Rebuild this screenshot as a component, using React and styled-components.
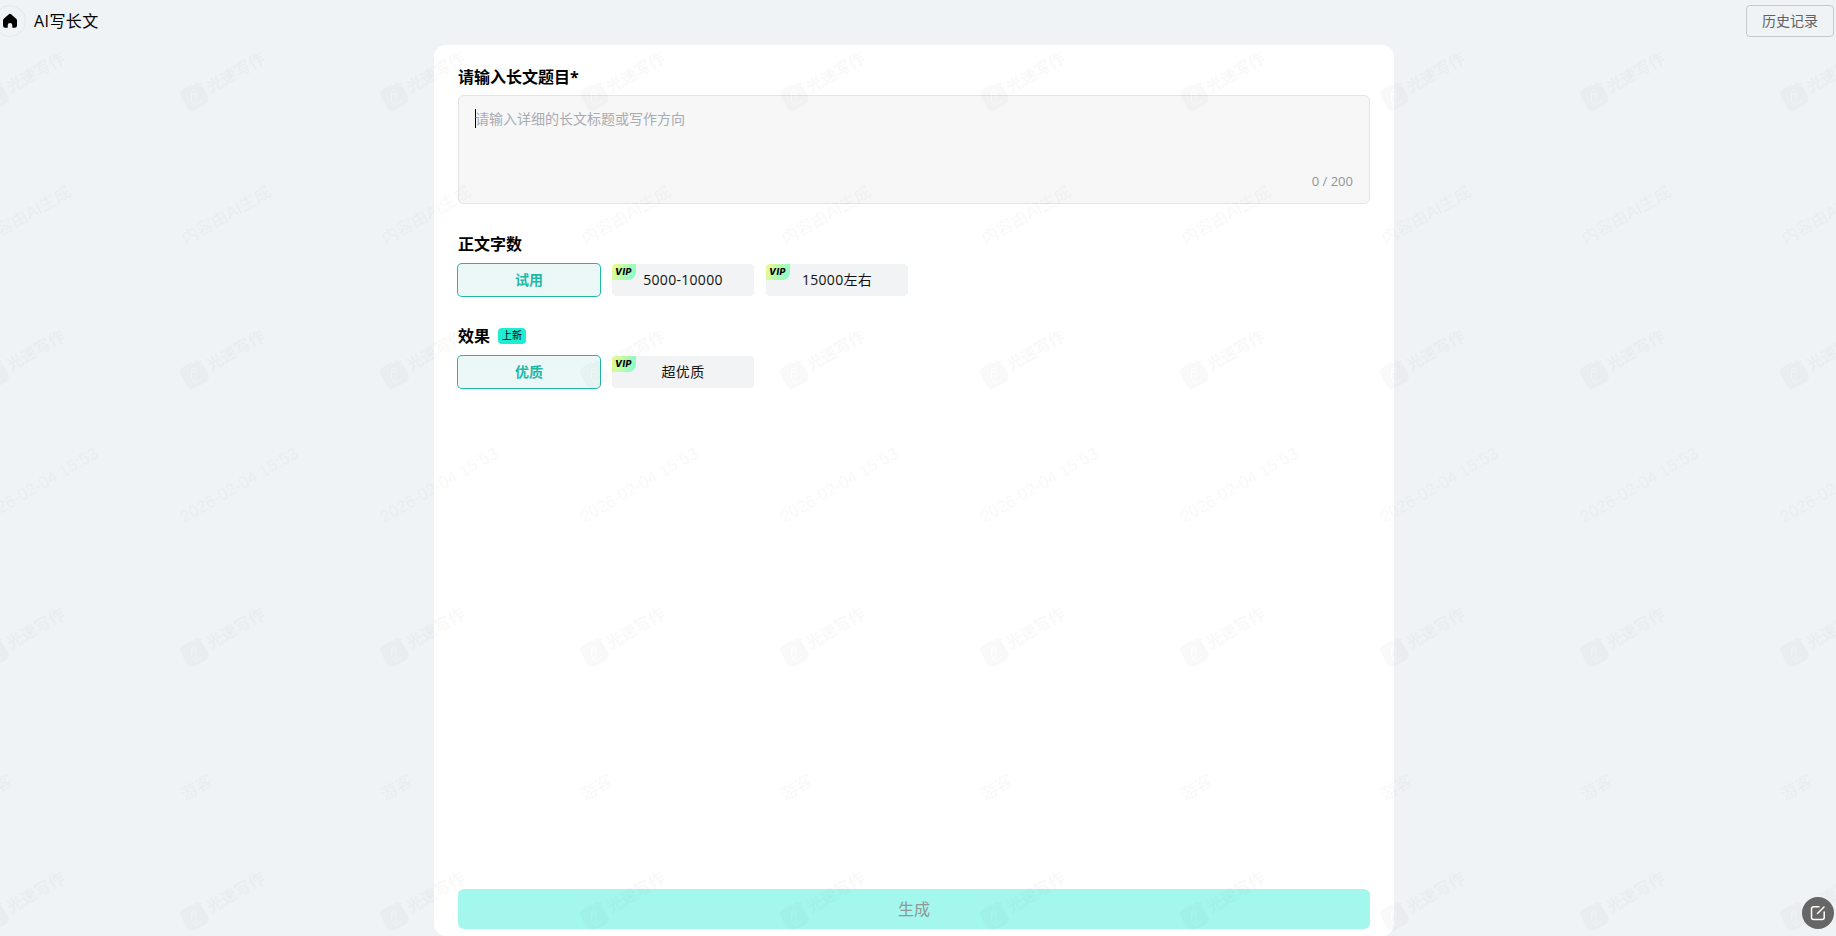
import React, { useState } from 'react'
import styled, { createGlobalStyle } from 'styled-components';

const GlobalStyle = createGlobalStyle`
    * {
        box-sizing: border-box;
    }
    body {
        margin: 0;
        overflow: hidden;
        font-family: "Open Sans", "Noto Sans CJK SC", sans-serif;
        font-size: 14px;
        color: #000;
        background-color: #eff3f6;
    }
    button {
        font-family: inherit;
        cursor: pointer;
    }
`;

const Page = styled.div`
    position: relative;
    height: 100vh;
    display: flex;
    flex-direction: column;
    overflow: hidden;
`;

const Topbar = styled.header`
    height: 45px;
    padding: 5px 2px 8px 0;
    display: flex;
    align-items: center;
    justify-content: space-between;
`;

const Homelink = styled.div`
    display: flex;
    align-items: center;
    gap: 8px;
    margin-left: -6px;
    font-size: 16px;
    letter-spacing: 0.4px;
    line-height: 32px;
`;

const Homecircle = styled.span`
    width: 32px;
    height: 32px;
    display: flex;
    align-items: center;
    justify-content: center;
    border: 1px solid #e3e8ea;
    border-radius: 50%;
`;

const Historybutton = styled.button`
    width: 88px;
    height: 32px;
    padding: 0 0 2px;
    font-size: 14px;
    color: #606266;
    background-color: transparent;
    border: 1px solid #c4c8cc;
    border-radius: 4px;
`;

const Card = styled.main`
    width: 960px;
    flex: 1;
    align-self: center;
    margin-right: 8px;
    padding: 20px 24px 7px;
    display: flex;
    flex-direction: column;
    background-color: white;
    border-radius: 12px;
`;

const Sectiontitle = styled.h2`
    height: 24px;
    margin: 0 0 ${props => props.$gap || 8}px;
    display: flex;
    align-items: center;
    gap: 8px;
    font-size: 16px;
    font-weight: 700;
    line-height: 24px;
`;

const Titlefield = styled.div`
    height: 109px;
    margin-bottom: 28px;
    padding: 12px 16px 12px;
    display: flex;
    flex-direction: column;
    justify-content: space-between;
    background-color: #f7f7f7;
    border: 1px solid #e4e4e4;
    border-radius: 6px;
`;

const Placeholder = styled.div`
    display: flex;
    align-items: center;
    height: 21px;
    color: #a8abb2;
    line-height: 21px;

    &::before {
        content: "";
        width: 1px;
        height: 19px;
        margin-right: -1px;
        background-color: black;
    }
`;

const Counter = styled.span`
    align-self: flex-end;
    font-size: 13px;
    line-height: 20px;
    color: #909399;
`;

const Optionrow = styled.div`
    display: flex;
    gap: 12px;
    margin-bottom: 28px;
`;

const Option = styled.button`
    position: relative;
    width: 142px;
    height: 32px;
    padding: 0 0 2px;
    border: none;
    border-radius: 4px;
    font-size: 14px;
    letter-spacing: ${props => props.$active ? '0' : '0.3px'};
    font-weight: ${props => props.$active ? 700 : 400};
    color: ${props => props.$active ? '#1fb8a6' : '#111'};
    background-color: ${props => props.$active ? '#ebf8f7' : '#f2f3f5'};
    box-shadow: ${props => props.$active ? '0 0 0 1px #1fb8a6' : 'none'};
`;

const Vipbadge = styled.span`
    position: absolute;
    top: 0;
    left: 0;
    width: 24px;
    height: 16px;
    padding-right: 1px;
    border-radius: 4px 0 8px 0;
    font-family: Inter, sans-serif;
    font-size: 9px;
    font-style: italic;
    font-weight: 800;
    letter-spacing: 0.6px;
    line-height: 16px;
    text-align: center;
    color: #000;
    background: linear-gradient(110deg, #f0fb8e, #7dfdd0);
`;

const Newtag = styled.span`
    width: 28px;
    height: 16px;
    border-radius: 4px;
    font-size: 10px;
    font-weight: 400;
    line-height: 15px;
    text-align: center;
    background-color: #1fecd2;
`;

const Generatebutton = styled.button`
    height: 40px;
    margin-top: auto;
    padding: 0 0 2px;
    border: none;
    border-radius: 6px;
    font-size: 16px;
    color: #909896;
    background-color: #a4f7ed;
`;

const Watermarklayer = styled.svg`
    position: absolute;
    top: 0;
    left: 0;
    opacity: 0.019;
    pointer-events: none;
    font-family: "Liberation Sans", "Noto Sans CJK SC", sans-serif;
    font-size: 16.8px;
`;

const Feedback = styled.button`
    position: absolute;
    right: 2px;
    bottom: 7px;
    width: 32px;
    height: 32px;
    padding: 0;
    display: flex;
    align-items: center;
    justify-content: center;
    border: none;
    border-radius: 50%;
    background-color: #666;
`;

const lengths = [
    { label: '试用' },
    { label: '5000-10000', vip: true },
    { label: '15000左右', vip: true },
];

const qualities = [
    { label: '优质' },
    { label: '超优质', vip: true },
];

const columns = Array.from({ length: 10 }, (_, i) => i * 200 - 20);
const logorows = [96.5, 374.5, 652.5, 916.5];
const textrows = [
    { text: '内容由AI生成', x: 6, y: 245 },
    { text: '2026-02-04 15:53', x: 4.5, y: 523 },
    { text: '游客', x: 5, y: 801 },
];

function Homeicon() {
    return (
        <svg width="16" height="16" viewBox="0 0 16 16">
            <path d="M6.6 1.5a2.1 2.1 0 0 1 2.8 0l4.8 4.2c.5.5.8 1 .8 1.7v5.2a2.2 2.2 0 0 1-2.2 2.2h-2.5v-2.5a2.3 2.3 0 0 0-4.6 0v2.5H3.2A2.2 2.2 0 0 1 1 12.6V7.4c0-.7.3-1.2.8-1.7z" fill="#000" />
        </svg>
    )
}

function Optiongroup({ items }) {
    const [current, setCurrent] = useState(0);
    return (
        <Optionrow>
            {items.map((item, i) => (
                <Option key={item.label} $active={i === current} onClick={() => setCurrent(i)}>
                    {item.vip && <Vipbadge>VIP</Vipbadge>}
                    {item.label}
                </Option>
            ))}
        </Optionrow>
    )
}

function Watermarklogo({ x, y }) {
    return (
        <g transform={`translate(${x + 14.5} ${y}) rotate(-30)`}>
            <path d="M-6-12H3L5.5-9 8-12.5 9.5-9.5 13-9 10.5-6 12-3V6a6 6 0 0 1-6 6H-6a6 6 0 0 1-6-6V-6a6 6 0 0 1 6-6z" />
            <g transform="rotate(30)" fill="none" stroke="#fff" strokeWidth="1">
                <path d="M-3-4a2.2 2.2 0 0 1 4.4 0v8l-2.2 4-2.200-4zM-3-2.5h4.4" />
                <path d="M0 8.5q5-.5 8-5" />
            </g>
            <text x="15.5" y="5.5" fontSize="16" fontWeight="700">光速写作</text>
        </g>
    )
}

function Watermark() {
    return (
        <Watermarklayer width="1836" height="936" fill="#000">
            {columns.map(x => (
                <g key={x}>
                    {logorows.map(y => <Watermarklogo key={y} x={x} y={y} />)}
                    {textrows.map(row => (
                        <text key={row.text} transform={`translate(${x + row.x} ${row.y}) rotate(-30)`}>{row.text}</text>
                    ))}
                </g>
            ))}
        </Watermarklayer>
    )
}

function App() {
    return (
        <>
            <GlobalStyle />
            <Page>
                <Topbar>
                    <Homelink>
                        <Homecircle><Homeicon /></Homecircle>
                        AI写长文
                    </Homelink>
                    <Historybutton>历史记录</Historybutton>
                </Topbar>
                <Card>
                    <Sectiontitle $gap={6}>请输入长文题目*</Sectiontitle>
                    <Titlefield>
                        <Placeholder>请输入详细的长文标题或写作方向</Placeholder>
                        <Counter>0 / 200</Counter>
                    </Titlefield>
                    <Sectiontitle>正文字数</Sectiontitle>
                    <Optiongroup items={lengths} />
                    <Sectiontitle>效果<Newtag>上新</Newtag></Sectiontitle>
                    <Optiongroup items={qualities} />
                    <Generatebutton>生成</Generatebutton>
                </Card>
                <Watermark />
                <Feedback>
                    <svg width="16" height="16" viewBox="0 0 16 16" fill="none" stroke="#fff" strokeWidth="1.5" strokeLinecap="round">
                        <path d="M9 1.8H3.5a2 2 0 0 0-2 2v8.7a2 2 0 0 0 2 2h8.7a2 2 0 0 0 2-2V7M7.5 8.5l6.5-6.5" />
                    </svg>
                </Feedback>
            </Page>
        </>
    )
}

export default App;
